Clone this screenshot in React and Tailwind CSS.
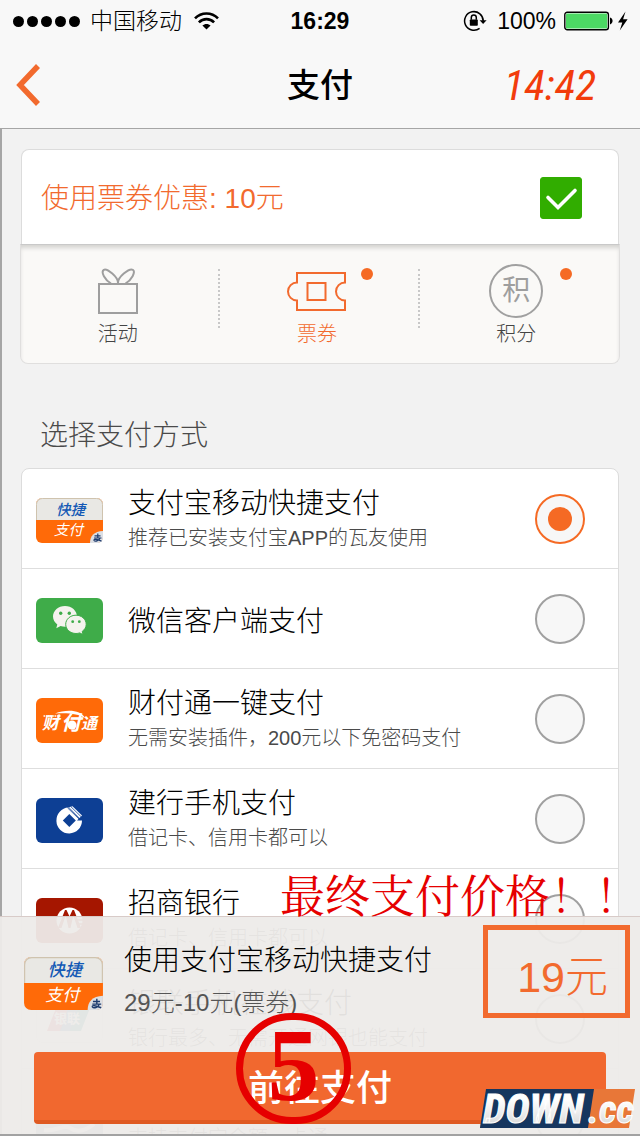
import React, { useState } from "react";

const UI = "font-['Liberation_Sans','Noto_Sans_CJK_SC',sans-serif]";

function WifiIcon() {
  return (
    <svg className="h-[18px] w-[25px]" viewBox="0 0 25 18" fill="none" stroke="#000" strokeWidth="2.6" aria-hidden="true">
      <path d="M1 6.4C7.4-.2 17.6-.2 24 6.4" />
      <path d="M4.9 10.4C9.2 6 15.8 6 20.1 10.4" />
      <path d="M12.5 17.6 8.4 13.5C10.7 11.4 14.3 11.4 16.6 13.5Z" fill="#000" stroke="none" />
    </svg>
  );
}

function RotationLockIcon() {
  return (
    <svg className="h-[22px] w-6" viewBox="0 0 24 22" aria-hidden="true">
      <path d="M20.2 11.2A9.3 9.3 0 1 0 16.6 18.3" fill="none" stroke="#000" strokeWidth="1.5" />
      <path d="M16.6 10.2h7L20.1 14z" />
      <rect x="6.8" y="9.4" width="8" height="6.4" rx="0.8" />
      <path d="M8.3 9.8V7.6a2.5 2.6 0 0 1 5 0v2.2" fill="none" stroke="#000" strokeWidth="1.5" />
    </svg>
  );
}

function BatteryIcon() {
  return (
    <svg className="h-5 w-[66px]" viewBox="0 0 66 20" aria-hidden="true">
      <rect x="0.8" y="1.3" width="43.6" height="17.4" rx="2.5" fill="#fff" stroke="#000" strokeWidth="1.4" />
      <rect x="2" y="2.6" width="41.2" height="14.8" rx="1.2" fill="#4cd964" />
      <path d="M46 6.6c3.4.6 3.4 6.2 0 6.8z" />
      <path d="M61.5.5 54 11.6h4.3L55.8 19.500 63.6 8.200h-4.500z" />
    </svg>
  );
}

function GiftIcon() {
  return (
    <svg className="h-[46px] w-10" viewBox="0 0 40 46" fill="none" stroke="#9e9e9e" strokeWidth="2" aria-hidden="true">
      <rect x="1" y="16" width="38" height="29" />
      <path d="M20 15.500C20.500 9 9 .2 5.800 1.800 2.500 4 7 12 13 15.500" />
      <path d="M20 15.500C19.500 9 31 .2 34.800 1.800 38 4 33.500 12 27.500 15.500" />
    </svg>
  );
}

function TicketIcon() {
  return (
    <svg className="h-[39px] w-[59px]" viewBox="0 0 59 39" fill="none" stroke="#f26a2e" strokeWidth="2" aria-hidden="true">
      <path d="M10 1h48v9.500a9 9 0 0 0 0 18v9.500H10v-9.500a9 9 0 0 1 0-18z" />
      <rect x="20.5" y="11" width="18" height="17" />
    </svg>
  );
}

function QuickPayLogo({ className }) {
  return (
    <svg className={className} viewBox="0 0 67 45" aria-hidden="true">
      <rect width="67" height="45" rx="6" fill="#ff6a08" />
      <path d="M0 22V6a6 6 0 0 1 6-6h55a6 6 0 0 1 6 6v16z" fill="#e9e8e4" />
      <path d="M.5 22V6.500A6 6 0 0 1 6.500.5h54a6 6 0 0 1 6 6V22" fill="none" stroke="#cfc3ae" />
      <g fontFamily="'Noto Sans CJK SC',sans-serif" fontStyle="italic" fontSize="14.500">
        <text x="20" y="16.500" fill="#1459b5" fontWeight="500">快捷</text>
        <text x="18" y="37" fill="#fff">支付</text>
      </g>
      <path d="M54 45c0-7 4-11.500 13-12v7a5 5 0 0 1-5 5z" fill="#dcdfe4" />
      <path d="M58.500 37.800h6M61.800 35.500v4.500M58 40h7.500M64 40c-1 3-5 3.800-6 2.300-.6-1.600 3-1.200 7.500.8" fill="none" stroke="#1d3b6e" strokeWidth="1.200" />
    </svg>
  );
}

function WechatLogo({ className }) {
  return (
    <svg className={className} viewBox="0 0 67 45" aria-hidden="true">
      <rect width="67" height="45" rx="6" fill="#3fac49" />
      <path d="M29 8c-6.700 0-12 4.700-12 10.600 0 3.300 1.700 6 4.300 8L20.300 30.200l4.300-2.200c1.500.5 3 .7 4.400.7 6.700 0 12-4.300 12-10.100S35.700 8 29 8z" fill="#f5f3ee" />
      <path d="M40 17.200c-5.800 0-10.300 4.100-10.300 9.100s4.500 9.200 10.300 9.200c1.300 0 2.600-.2 3.700-.6l3.300 1.700-.8-3.200c2.500-1.700 4-4.200 4-7.100 0-5-4.500-9.100-10.200-9.100z" fill="#f5f3ee" stroke="#3fac49" strokeWidth="1" />
      <g fill="#3fac49">
        <circle cx="24.700" cy="15.300" r="1.700" />
        <circle cx="33.300" cy="15.300" r="1.700" />
        <circle cx="36.700" cy="23.700" r="1.400" />
        <circle cx="43.300" cy="23.700" r="1.400" />
      </g>
    </svg>
  );
}

function TenpayLogo({ className }) {
  return (
    <svg className={className} viewBox="0 0 67 45" aria-hidden="true">
      <rect width="67" height="45" rx="6" fill="#ff6a08" />
      <g fontFamily="'Noto Sans CJK SC',sans-serif" fontStyle="italic" fontWeight="700" fill="#fff">
        <text x="6" y="31" fontSize="17">财</text>
        <text x="25" y="31.500" fontSize="20">付</text>
        <text x="45" y="31" fontSize="16">通</text>
      </g>
      <path d="M19 15.500c11-4.500 26-4 30 4.500-6-4-17-5.500-30-4.500z" fill="#fff" />
      <circle cx="36" cy="27" r="4.500" fill="#fff" />
      <path d="M7.500 18h17" stroke="#fff" strokeWidth="1.300" strokeDasharray="1.500 .7" />
    </svg>
  );
}

function CcbLogo({ className }) {
  return (
    <svg className={className} viewBox="0 0 67 45" aria-hidden="true">
      <rect width="67" height="45" rx="6" fill="#0d3f94" />
      <path d="M46 22.500a12.800 13 0 1 1-13.500-13L43 20.500 41 22.500z" fill="#fff" />
      <path d="M33.300 16 39.800 22.500 33.300 29 26.800 22.500z" fill="#0d3f94" />
      <path d="M33 9.300 36.500 8.200 46 17.500 43.500 20z" fill="#fff" />
      <path d="M31.500 9.800 43.500 21.500M35 8.800 45 18.600" stroke="#0d3f94" strokeWidth="0.800" />
    </svg>
  );
}

function CmbLogo({ className }) {
  return (
    <svg className={className} viewBox="0 0 67 45" aria-hidden="true">
      <rect width="67" height="45" rx="6" fill="#a51600" />
      <circle cx="33.500" cy="22.500" r="13" fill="#fff" />
      <path d="M22 30 29 12h1.500l3 6.500 3-6.500H38l7 18h-3.500L37.300 17.500 34.500 30h-2L29.700 17.500 25.500 30z" fill="#a51600" />
      <path d="M41 22h7M42 26h6" stroke="#a51600" strokeWidth="1.500" />
    </svg>
  );
}

function UnionPayLogo({ className }) {
  return (
    <svg className={className} viewBox="0 0 67 45" aria-hidden="true">
      <rect x=".5" y=".5" width="66" height="44" rx="6" fill="#fff" stroke="#e6e6e6" />
      <path d="M20 10h14l-8 23H11z" fill="#d9444a" />
      <path d="M32 10h12l-8 23H24z" fill="#3a6ea5" />
      <path d="M42 10h12l-9 23H34z" fill="#1d8b83" />
      <text x="18" y="25" fontSize="13" fontWeight="700" fill="#fff" fontFamily="'Noto Sans CJK SC',sans-serif">银联</text>
    </svg>
  );
}

function AlipayLogo({ className }) {
  return (
    <svg className={className} viewBox="0 0 67 45" aria-hidden="true">
      <rect width="67" height="45" rx="6" fill="#8d99a8" />
      <path d="M8 32c12 2 20-6 26-2s14 4 24-4" fill="none" stroke="#fff" strokeWidth="4" />
    </svg>
  );
}

const METHODS = [
  { id: "quick", title: "支付宝移动快捷支付", note: "推荐已安装支付宝APP的瓦友使用", Logo: QuickPayLogo },
  { id: "wechat", title: "微信客户端支付", Logo: WechatLogo },
  { id: "tenpay", title: "财付通一键支付", note: "无需安装插件，200元以下免密码支付", Logo: TenpayLogo },
  { id: "ccb", title: "建行手机支付", note: "借记卡、信用卡都可以", Logo: CcbLogo },
  { id: "cmb", title: "招商银行", note: "借记卡、信用卡都可以", Logo: CmbLogo },
  { id: "union", title: "银联手机在线支付", note: "银行最多、无需开通网银也能支付", Logo: UnionPayLogo },
  { id: "alipay", title: "支付宝网页支付", note: "支持支付宝余额、卡通", Logo: AlipayLogo },
];

function StatusBar() {
  return (
    <div className="grid h-[41px] grid-cols-[1fr_auto_1fr] items-center px-[10px] text-[23px] leading-[42px] text-black">
      <div className="flex items-center pl-[3px]">
        <div className="flex gap-[3px]">
          {[0, 1, 2, 3, 4].map((n) => (
            <span key={n} className="size-[11px] rounded-full bg-black" />
          ))}
        </div>
        <span className="ml-[10px] font-light">中国移动</span>
        <span className="ml-3">
          <WifiIcon />
        </span>
      </div>
      <span className="font-bold">16:29</span>
      <div className="flex items-center justify-end">
        <RotationLockIcon />
        <span className="ml-[10px] mr-2">100%</span>
        <BatteryIcon />
      </div>
    </div>
  );
}

function NavBar() {
  return (
    <div className="grid h-[87px] grid-cols-[1fr_auto_1fr] items-center px-4">
      <button type="button" aria-label="返回" className="w-6">
        <svg className="h-[42px] w-6" viewBox="0 0 24 42" fill="none" stroke="#f26a2e" strokeWidth="5.500" aria-hidden="true">
          <path d="M22 2 4 21 22 40" />
        </svg>
      </button>
      <h1 className="pt-[3px] text-[33px] font-medium leading-[84px] text-black">支付</h1>
      <span className="mr-7 justify-self-end font-['Roboto_Condensed','Liberation_Sans',sans-serif] text-[43px] italic leading-[84px] text-[#f23c0c]">
        14:42
      </span>
    </div>
  );
}

function DiscountTab({ label, active, dot, divider, icon, onClick }) {
  return (
    <button
      type="button"
      role="tab"
      aria-selected={active}
      onClick={onClick}
      className="relative flex flex-1 flex-col items-center pr-[6px] pt-[18px]"
    >
      <span className="flex h-14 items-center">{icon}</span>
      <span
        className={
          active
            ? "mt-[3px] text-[20px] font-light leading-6 text-[#f26a2e]"
            : "mt-[3px] text-[20px] font-light leading-6 text-[#444]"
        }
      >
        {label}
      </span>
      {dot && <span className="absolute right-[47px] top-[23px] size-3 rounded-full bg-[#f56a24]" />}
      {divider && <span className="absolute right-0 top-6 h-[59px] border-r-2 border-dotted border-[#c8c8c8]" />}
    </button>
  );
}

function Discounts() {
  const [on, setOn] = useState(true);
  const [tab, setTab] = useState("ticket");
  return (
    <section className="mt-5">
      <label className="mx-px flex h-[95px] items-center justify-between rounded-t-lg border border-b-0 border-[#dcdcdc] bg-white pl-[19px] pr-9 pt-[2px]">
        <span className="pt-[2px] text-[28px] font-light leading-10 text-[#f26a2e]">使用票券优惠: 10元</span>
        <span className="grid">
          <input
            type="checkbox"
            checked={on}
            onChange={() => setOn(!on)}
            className="col-start-1 row-start-1 size-[42px] appearance-none rounded-[3px] border border-[#31ad00] checked:bg-[#31ad00]"
          />
          <svg className="pointer-events-none col-start-1 row-start-1 size-[42px]" viewBox="0 0 42 42" fill="none" stroke="#fff" strokeWidth="3.600" strokeLinecap="round" aria-hidden="true">
            <path d="M8 20.500 18 30.500 35 13.500" />
          </svg>
        </span>
      </label>
      <div role="tablist" className="flex h-[120px] rounded-b-lg border border-[#e0dfde] border-t-[#c9c9c9] bg-[#faf9f7] shadow-[inset_0_4px_4px_-1px_#d4d3d1]">
        <DiscountTab label="活动" active={tab === "event"} onClick={() => setTab("event")} divider icon={<GiftIcon />} />
        <DiscountTab label="票券" active={tab === "ticket"} onClick={() => setTab("ticket")} divider dot icon={<TicketIcon />} />
        <DiscountTab
          label="积分"
          active={tab === "points"}
          onClick={() => setTab("points")}
          dot
          icon={
            <span className="flex size-[54px] items-center justify-center rounded-full border-2 border-[#a0a0a0] text-[28px] leading-none text-[#9e9e9e]">
              积
            </span>
          }
        />
      </div>
    </section>
  );
}

function MethodRow({ method, checked, onSelect }) {
  const { title, note, Logo } = method;
  return (
    <label className="flex h-[100px] items-center border-b border-[#dedede] pl-[14px] pr-[33px]">
      <Logo className="mt-1 h-[45px] w-[67px] shrink-0" />
      <span className="ml-[25px] flex flex-1 flex-col whitespace-nowrap pt-[6px] font-light">
        <span className="text-[28px] leading-8 text-black">{title}</span>
        {note && <span className="text-[20px] leading-9 text-[#4a4a4a]">{note}</span>}
      </span>
      <input
        type="radio"
        name="method"
        checked={checked}
        onChange={onSelect}
        className="grid size-[50px] appearance-none place-items-center rounded-full border-2 border-[#a0a0a0] bg-[#f7f7f7] before:size-6 before:rounded-full checked:border-[#f56a24] checked:before:bg-[#f56a24]"
      />
    </label>
  );
}

function DownLogo() {
  return (
    <svg className="absolute bottom-1 right-0 h-[42px] w-40" viewBox="0 0 160 42" role="img" aria-label="DOWN.cc">
      <defs>
        <linearGradient id="silver" x1="0" y1="0" x2="0" y2="1">
          <stop offset="0.300" stopColor="#fff" />
          <stop offset="1" stopColor="#cfcfcf" />
        </linearGradient>
      </defs>
      <path d="M6 1h149l-6 39H0z" fill="#e87738" />
      <path d="M6 1h108l-6 39H0z" fill="#16365f" />
      <g fontFamily="'Roboto Condensed','Liberation Sans',sans-serif" fontWeight="700" fontStyle="italic" fill="url(#silver)" stroke="#fff">
        <text x="3" y="35" fontSize="41" strokeWidth="1">DOWN</text>
        <text x="108" y="35" fontSize="39" strokeWidth="1">.cc</text>
      </g>
    </svg>
  );
}

function CheckoutSheet() {
  return (
    <footer className="absolute inset-x-0 bottom-0 border-b-2 border-t border-b-[#a2a2a2] border-t-[#d8cbc8] bg-[#edebe9]/95">
      <div className="flex items-start pl-6 pr-[10px] pt-2">
        <QuickPayLogo className="mt-8 h-[53px] w-[79px] shrink-0" />
        <div className="ml-[21px] flex-1 whitespace-nowrap pt-4 font-light">
          <p className="text-[28px] leading-10 text-black">使用支付宝移动快捷支付</p>
          <p className="mt-[2px] text-[24px] leading-10 text-[#555]">29元-10元(票券)</p>
        </div>
        <p className="flex h-[93px] w-[147px] items-center justify-end border-[5px] border-[#f26a2e] pr-[17px] pt-3 text-[43px] font-light text-[#f26a2e]">
          19元
        </p>
      </div>
      <div className="px-[34px] pb-[10px] pt-[29px]">
        <button type="button" className="h-[72px] w-full rounded-[4px] border-b-4 border-[#df5a22] bg-[#f1682f] pt-[6px] text-[36px] font-medium leading-[62px] text-white">
          前往支付
        </button>
      </div>
      <p className="absolute bottom-[218px] right-0 whitespace-nowrap font-['Noto_Serif_CJK_SC','Noto_Sans_CJK_SC',serif] text-[45px] font-normal leading-[44px] text-[#e60000]">
        最终支付价格！！
      </p>
      <span className="absolute bottom-[10px] left-[236px] flex h-[111px] w-[115px] items-center justify-center rounded-full border-[7px] border-[#e60000] pb-2 font-['Liberation_Serif',serif] text-[104px] font-bold leading-none text-[#e60000]">
        5
      </span>
      <DownLogo />
    </footer>
  );
}

export default function App() {
  const [method, setMethod] = useState("quick");
  return (
    <div className={`relative flex h-screen flex-col overflow-hidden bg-[#f2f2f2] ${UI}`}>
      <header className="shrink-0 border-b border-[#a6a6a6] bg-[#f8f8f8]">
        <StatusBar />
        <NavBar />
      </header>
      <main className="min-h-0 flex-1 overflow-hidden border-l-2 border-[#a6a6a6] pl-[18px] pr-5">
        <Discounts />
        <section>
          <h2 className="mt-[52px] pl-5 text-[28px] font-light leading-10 text-[#4a4a4a]">选择支付方式</h2>
          <div className="mx-px mt-3 rounded-t-lg border border-[#dcdcdc] bg-white">
            {METHODS.map((m) => (
              <MethodRow key={m.id} method={m} checked={m.id === method} onSelect={() => setMethod(m.id)} />
            ))}
          </div>
        </section>
      </main>
      <CheckoutSheet />
    </div>
  );
}
